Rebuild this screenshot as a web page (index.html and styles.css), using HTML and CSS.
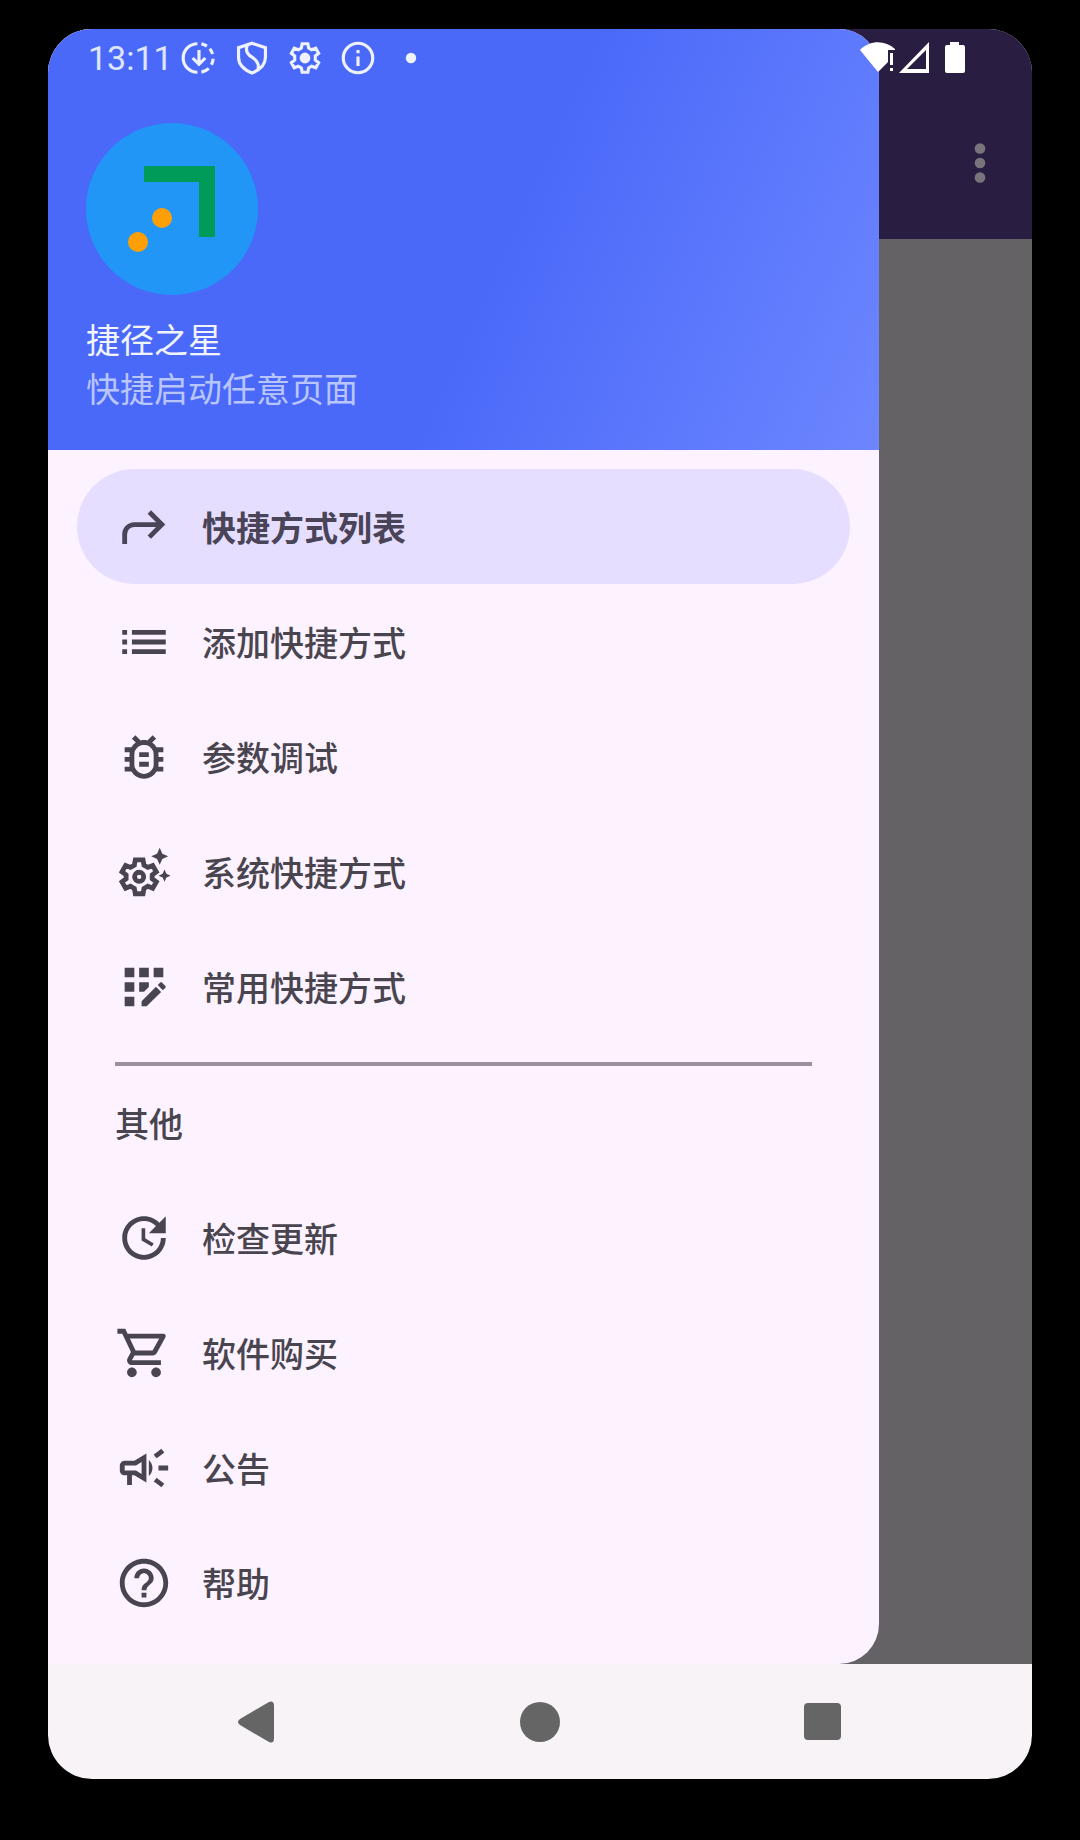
FILE: index.html
```html
<!DOCTYPE html>
<html lang="zh-CN">
<head>
    <meta charset="UTF-8">
    <meta name="viewport" content="width=device-width, initial-scale=1.0">
    <title>捷径之星</title>
    <link rel="stylesheet" href="styles.css">
</head>
<body>

    <div class="phone">
        <div class="screen">

            <!-- App page behind the drawer -->
            <div class="page">
                <div class="app-bar">
                    <button class="more-button" aria-label="更多选项">
                        <svg class="icon" viewBox="0 0 24 24"><circle cx="12" cy="6" r="2.200"/><circle cx="12" cy="12" r="2.200"/><circle cx="12" cy="18" r="2.200"/></svg>
                    </button>
                </div>
            </div>

            <!-- Navigation Drawer -->
            <div class="drawer">
                <div class="drawer-header">
                    <svg class="logo" viewBox="0 0 172 172">
                        <circle cx="86" cy="86" r="86" fill="#2196f6"/>
                        <path d="M58 43h71v71h-16V59H58z" fill="#009b58"/>
                        <circle cx="76" cy="95" r="10" fill="#ff9f06"/>
                        <circle cx="52" cy="119" r="10" fill="#ff9f06"/>
                    </svg>
                    <div class="app-name">捷径之星</div>
                    <div class="app-slogan">快捷启动任意页面</div>
                </div>

                <nav class="menu">
                    <a class="menu-item active" href="#">
                        <svg class="icon line" viewBox="0 0 24 24"><path d="M4 19v-4a4 4 0 0 1 4-4h11.500M14.200 5.800L19.400 11l-5.200 5.200"/></svg>
                        <span>快捷方式列表</span>
                    </a>
                    <a class="menu-item" href="#">
                        <svg class="icon" viewBox="0 0 24 24"><path d="M3 7h2v2H3zM3 11h2v2H3zM3 15h2v2H3zM7 7h14v2H7zM7 11h14v2H7zM7 15h14v2H7z"/></svg>
                        <span>添加快捷方式</span>
                    </a>
                    <a class="menu-item" href="#">
                        <svg class="icon" viewBox="0 0 24 24"><path d="M20 8h-2.810c-.45-.78-1.070-1.450-1.820-1.960L17 4.410 15.590 3l-2.170 2.170C12.960 5.060 12.490 5 12 5s-.96.06-1.410.17L8.410 3 7 4.410l1.620 1.630C7.880 6.550 7.260 7.220 6.810 8H4v2h2.090c-.05.33-.09.66-.09 1v1H4v2h2v1c0 .34.04.67.09 1H4v2h2.810c1.040 1.790 2.970 3 5.190 3s4.150-1.210 5.190-3H20v-2h-2.090c.05-.33.09-.66.09-1v-1h2v-2h-2v-1c0-.34-.04-.67-.09-1H20V8zm-4 4v3c0 .22-.03.47-.07.7l-.1.65-.37.65c-.72 1.240-2.040 2-3.460 2s-2.740-.77-3.460-2l-.37-.64-.1-.65C8.030 15.480 8 15.230 8 15v-4c0-.23.03-.48.07-.7l.1-.65.37-.65c.3-.52.72-.97 1.210-1.310l.57-.39.74-.18c.31-.08.63-.12.94-.12.32 0 .63.04.95.12l.68.16.61.42c.5.34.91.78 1.210 1.310l.38.65.1.65c.04.22.07.47.07.69v1zm-6 2h4v2h-4zm0-4h4v2h-4z"/></svg>
                        <span>参数调试</span>
                    </a>
                    <a class="menu-item" href="#">
                        <svg class="icon" viewBox="0 0 24 24">
                            <path d="M17.410 6.590L15 5.500l2.410-1.090L18.500 2l1.090 2.410L22 5.500l-2.410 1.090L18.500 9zM21.280 12.720L20.500 11l-.78 1.720-1.720.78 1.720.78.78 1.720.78-1.720L23 13.500z"/>
                            <path class="gear" d="M8.400 7h3.200l.4 2.200 1.600.9 2-.8 1.500 2.600-1.700 1.300v1.600l1.700 1.300-1.500 2.600-2-.8-1.600.9-.4 2.200H8.400L8 18.800l-1.600-.9-2 .8-1.500-2.600 1.700-1.300v-1.600l-1.700-1.300 1.500-2.600 2 .8L8 9.200z"/>
                            <circle class="gear" cx="10" cy="14" r="1.900"/>
                        </svg>
                        <span>系统快捷方式</span>
                    </a>
                    <a class="menu-item" href="#">
                        <svg class="icon" viewBox="0 0 24 24"><path d="M10 4h4v4h-4zM4 16h4v4H4zM4 10h4v4H4zM4 4h4v4H4zM16 4h4v4h-4zM11 17.860V20h2.100l5.980-5.970-2.120-2.120zM14 12.030V10h-4v4h2.030zM20.850 11.560l-1.410-1.410c-.2-.2-.51-.2-.71 0l-1.060 1.060 2.120 2.120 1.060-1.060c.2-.2.2-.51 0-.71z"/></svg>
                        <span>常用快捷方式</span>
                    </a>

                    <hr class="divider">
                    <div class="menu-title">其他</div>

                    <a class="menu-item" href="#">
                        <svg class="icon" viewBox="0 0 24 24"><path d="M11 8v5l4.250 2.520.77-1.280-3.520-2.090V8zM21 10V3l-2.640 2.640C16.740 4.010 14.490 3 12 3c-4.970 0-9 4.030-9 9s4.030 9 9 9 9-4.030 9-9h-2c0 3.860-3.140 7-7 7s-7-3.140-7-7 3.140-7 7-7c1.930 0 3.680.79 4.950 2.050L14 10z"/></svg>
                        <span>检查更新</span>
                    </a>
                    <a class="menu-item" href="#">
                        <svg class="icon" viewBox="0 0 24 24"><path d="M15.550 13c.75 0 1.410-.41 1.750-1.030l3.580-6.490C21.250 4.820 20.770 4 20.010 4H5.210l-.94-2H1v2h2l3.600 7.590-1.350 2.440C4.520 15.370 5.480 17 7 17h12v-2H7l1.100-2zM6.160 6h12.150l-2.760 5H8.530zM7 18c-1.100 0-2 .9-2 2s.9 2 2 2 2-.9 2-2-.9-2-2-2zM17 18c-1.100 0-2 .9-2 2s.9 2 2 2 2-.9 2-2-.9-2-2-2z"/></svg>
                        <span>软件购买</span>
                    </a>
                    <a class="menu-item" href="#">
                        <svg class="icon" viewBox="0 0 24 24"><path d="M18 11v2h4v-2zM16 17.610c.96.71 2.210 1.650 3.200 2.390.4-.53.8-1.070 1.200-1.600-.99-.74-2.240-1.680-3.200-2.400-.4.540-.8 1.080-1.200 1.610zM20.400 5.600c-.4-.53-.8-1.070-1.200-1.600-.99.74-2.240 1.680-3.200 2.400.4.53.8 1.070 1.200 1.600.96-.72 2.210-1.650 3.200-2.400zM4 9c-1.100 0-2 .9-2 2v2c0 1.100.9 2 2 2h1v4h2v-4h1l5 3V6L8 9zm5.030 1.710L11 9.530v4.940l-1.970-1.180-.48-.29H4v-2h4.550zM15.500 12c0-1.330-.58-2.530-1.500-3.350v6.690c.92-.81 1.500-2.010 1.500-3.340z"/></svg>
                        <span>公告</span>
                    </a>
                    <a class="menu-item" href="#">
                        <svg class="icon" viewBox="0 0 24 24"><path d="M11 18h2v-2h-2zM12 2C6.480 2 2 6.480 2 12s4.480 10 10 10 10-4.480 10-10S17.520 2 12 2zm0 18c-4.410 0-8-3.590-8-8s3.590-8 8-8 8 3.590 8 8-3.590 8-8 8zm0-14c-2.210 0-4 1.790-4 4h2c0-1.100.9-2 2-2s2 .9 2 2c0 2-3 1.750-3 5h2c0-2.250 3-2.500 3-5 0-2.210-1.790-4-4-4z"/></svg>
                        <span>帮助</span>
                    </a>
                </nav>
            </div>

            <!-- System Status Bar -->
            <div class="status-bar">
                <span class="clock">13:11</span>
                <div class="notifications">
                    <svg class="status-icon line" viewBox="0 0 24 24">
                        <path d="M11 3a9 9 0 0 0 0 18"/>
                        <path d="M13.500 3.100a9 9 0 0 1 3.500 1.400M18.800 6.200a9 9 0 0 1 1.800 3.300M20.900 12.500a9 9 0 0 1-1 3.700M18.200 18.500a9 9 0 0 1-4.700 2.400"/>
                        <path d="M12 7v8M8 12l4 4 4-4"/>
                    </svg>
                    <svg class="status-icon line" viewBox="0 0 24 24">
                        <path d="M12 2.700l8.500 2.800v6c0 4.500-3.500 7.900-8.500 10-5-2.100-8.500-5.500-8.500-10v-6z"/>
                        <path d="M9 4c-1.500 3.800.2 5.800 3 7.500 3 1.900 4.800 4 3.800 7.600"/>
                    </svg>
                    <svg class="status-icon line" viewBox="0 0 24 24">
                        <path d="M10.200 3h3.600l.5 2.700 1.900 1.100 2.600-1 1.800 3.200-2.100 1.700v2.600l2.100 1.700-1.800 3.200-2.600-1-1.900 1.100-.5 2.700h-3.600l-.5-2.700-1.900-1.100-2.600 1L3.400 15l2.100-1.700v-2.600L3.400 9l1.800-3.200 2.600 1 1.900-1.100z"/>
                        <circle class="fill" cx="12" cy="12" r="2.400"/>
                    </svg>
                    <svg class="status-icon line" viewBox="0 0 24 24">
                        <circle cx="12" cy="12" r="9.300"/>
                        <path d="M12 11v6M12 7v2"/>
                    </svg>
                    <svg class="status-icon" viewBox="0 0 24 24"><circle cx="12" cy="12" r="3.300"/></svg>
                </div>
                <div class="signals">
                    <svg class="status-icon" viewBox="0 0 38 38">
                        <path d="M0 11C10 1 25 1 35 10v1h-7v12l-10 10z"/>
                        <path d="M30 14h3v12h-3zM30 29h3v3h-3z"/>
                    </svg>
                    <svg class="status-icon" viewBox="0 0 38 38"><path fill-rule="evenodd" d="M31 3v31H1zM28 11L9 30h19z"/></svg>
                    <svg class="status-icon" viewBox="0 0 38 38"><path d="M14 3h9v3h4q2 0 2 2v24q0 2-2 2H11q-2 0-2-2V8q0-2 2-2h3z"/></svg>
                </div>
            </div>
        </div>

        <!-- System Navigation Buttons -->
        <div class="system-nav">
            <button class="nav-button" aria-label="返回">
                <svg class="nav-icon" viewBox="0 0 42 42"><path d="M4 18L33 1q5-2 5 4v32q0 6-5 4L4 24q-4-3 0-6z"/></svg>
            </button>
            <button class="nav-button" aria-label="主页">
                <svg class="nav-icon" viewBox="0 0 42 42"><circle cx="21" cy="21" r="20"/></svg>
            </button>
            <button class="nav-button" aria-label="最近任务">
                <svg class="nav-icon" viewBox="0 0 42 42"><rect x="2" y="2" width="37" height="37" rx="4"/></svg>
            </button>
        </div>
    </div>

</body>
</html>
```
FILE: styles.css
```css
body {font-family: Roboto, "Noto Sans CJK SC", sans-serif;margin: 0;padding: 29px 48px 61px;box-sizing: border-box;background-color: #000;}
*, *::before, *::after {box-sizing: inherit;}
button {border: none;padding: 0;background: none;cursor: pointer;}
svg {display: block;flex-shrink: 0;fill: currentColor;}
.line {fill: none;stroke: currentColor;stroke-width: 2;}
.gear {fill: none;stroke: currentColor;stroke-width: 2;}
.fill {fill: currentColor;}
.phone {border-radius: 44px;overflow: hidden;background-color: #f7f3f7;}

/* page, drawer and status bar are stacked in the same grid cell */
.screen {display: grid;}
.page, .drawer, .status-bar {grid-area: 1 / 1;}

.page {background-color: #656266;}
.app-bar {display: flex;justify-content: flex-end;align-items: center;background-color: #2a1d42;height: 210px;padding: 58px 23px 0;}
.more-button {color: #777579;}
.icon {width: 58px;height: 58px;}

.drawer {margin-right: 153px;border-radius: 0 40px 40px 0;overflow: hidden;background-color: #fdf2ff;}
.drawer-header {padding: 94px 38px 35px;background: linear-gradient(114deg, #4a69f9 54%, #6d86ff);font-size: 34px;line-height: 49px;}
.logo {width: 172px;height: 172px;margin-bottom: 22px;}
.app-name {color: #f1f4ff;}
.app-slogan {color: #b9c5ff;}

.menu {padding: 19px 29px 24px;}
.menu-item {display: flex;align-items: center;gap: 29px;height: 115px;padding: 0 38px;border-radius: 58px;color: #49454f;font-size: 34px;font-weight: 500;text-decoration: none;}
.menu-item:hover {background-color: #f3e8fb;}
.menu-item.active {background-color: #e6deff;color: #4a4458;font-weight: 700;}
.divider {height: 4px;margin: 18px 38px 10px;border: none;background-color: #9c909d;}
.menu-title {padding: 0 38px 6px;color: #49454f;font-size: 34px;font-weight: 500;line-height: 98px;}

.status-bar {display: flex;align-items: center;align-self: start;height: 58px;padding: 0 58px 0 40px;color: #fff;}
.clock {color: #dfe5ff;font-size: 34px;margin-right: 7px;}
.notifications {display: flex;gap: 15px;color: #eef1ff;}
.signals {display: flex;margin-left: auto;}
.status-icon {width: 38px;height: 38px;}

.system-nav {display: flex;padding: 0 67px;}
.nav-button {display: flex;flex: 1;justify-content: center;align-items: center;height: 115px;color: #656565;}
.nav-icon {width: 42px;height: 42px;}
```
